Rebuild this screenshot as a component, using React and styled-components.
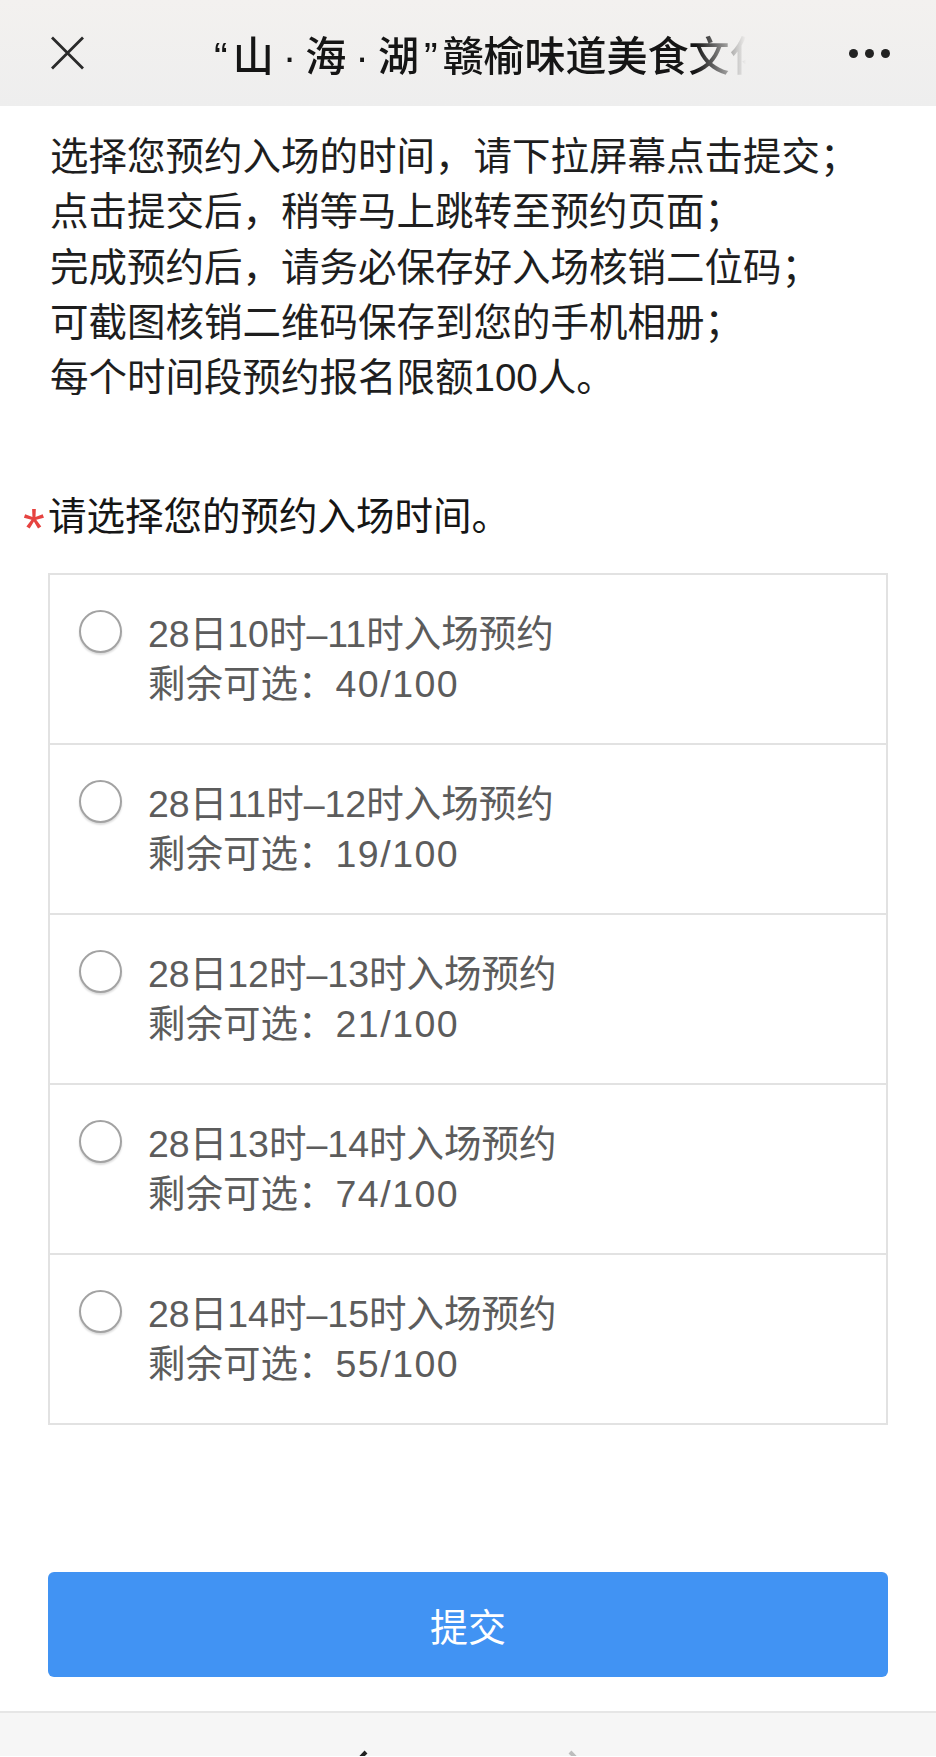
import React, { useState } from "react";
import styled, { createGlobalStyle } from "styled-components";

const GlobalStyle = createGlobalStyle`
  html, body {
    margin: 0;
    padding: 0;
    background: #ffffff;
    font-family: "Liberation Sans", "Noto Sans CJK SC", sans-serif;
  }
`;

const Page = styled.div`
  width: 936px;
  min-height: 1757px;
  display: flex;
  flex-direction: column;
  overflow: hidden;
`;

const Header = styled.div`
  height: 106px;
  display: flex;
  align-items: center;
  padding: 0 46px 0 50px;
  background: linear-gradient(#f3f1ef, #eeeeee);
  box-sizing: border-box;
`;

const CloseIcon = styled.svg`
  width: 35px;
  height: 34px;
  flex-shrink: 0;
`;

const Title = styled.div`
  margin-left: 124px;
  width: 537px;
  white-space: nowrap;
  overflow: hidden;
  font-size: 41px;
  font-weight: 500;
  color: #151515;
  -webkit-mask-image: linear-gradient(to right, #000 calc(100% - 50px), transparent);
  mask-image: linear-gradient(to right, #000 calc(100% - 50px), transparent);
`;

const Punct = styled.span`
  display: inline-block;
  margin: 0 ${(p) => p.$space || 0}px;
`;

const Dots = styled.div`
  margin-left: auto;
  display: flex;
  gap: 7px;
`;

const Dot = styled.span`
  width: 9px;
  height: 9px;
  border-radius: 50%;
  background: #222;
`;

const Content = styled.div`
  padding: 0 48px;
  display: flex;
  flex-direction: column;
`;

const Intro = styled.div`
  margin-top: 23px;
  padding-left: 2px;
  font-size: 38.5px;
  line-height: 55.3px;
  color: #1e1e1e;
`;

const Question = styled.div`
  margin-top: 84px;
  height: 55px;
  display: flex;
  align-items: flex-start;
  font-size: 38.5px;
  line-height: 55px;
  color: #161616;
`;

const Star = styled.span`
  margin-left: -25px;
  margin-top: 24px;
  width: 25px;
  color: #e64340;
  font-family: "Liberation Sans", sans-serif;
  font-size: 56px;
  line-height: 30px;
`;

const OptionBox = styled.div`
  margin-top: 29px;
  border: 2px solid #e2e2e2;
`;

const OptionRow = styled.label`
  display: flex;
  align-items: flex-start;
  padding: 34px 0 34px 29px;
  border-bottom: ${(p) => (p.$last ? "none" : "2px solid #e2e2e2")};
  cursor: pointer;
`;

const Radio = styled.span`
  margin-top: 1px;
  width: 43px;
  height: 43px;
  border-radius: 50%;
  box-sizing: border-box;
  border: 2px solid ${(p) => (p.$checked ? "#4193f3" : "#a3a3a3")};
  box-shadow: 0 2px 2px rgba(0, 0, 0, 0.14);
  background: #fff;
  flex-shrink: 0;
  display: flex;
  align-items: center;
  justify-content: center;

  &::after {
    content: "";
    width: 21px;
    height: 21px;
    border-radius: 50%;
    background: ${(p) => (p.$checked ? "#4193f3" : "transparent")};
  }
`;

const OptionText = styled.div`
  margin-left: 26px;
  font-size: 37.5px;
  line-height: 50px;
  color: #5c5c5c;
`;

const Count = styled.span`
  letter-spacing: 1.5px;
`;

const SubmitButton = styled.button`
  margin-top: 147px;
  height: 105px;
  border: none;
  border-radius: 6px;
  background: #4193f3;
  color: #ffffff;
  font-family: "Noto Sans CJK SC", sans-serif;
  font-size: 38px;
  cursor: pointer;
`;

const BottomBar = styled.div`
  margin-top: 34px;
  height: 45px;
  border-top: 2px solid #e6e6e6;
  background: #f6f6f6;
  display: flex;
  justify-content: center;
  gap: 196px;
  padding-top: 36px;
  box-sizing: border-box;
  overflow: hidden;
`;

const Chevron = styled.svg`
  width: 34px;
  height: 60px;
  flex-shrink: 0;
`;

const intro = [
  "选择您预约入场的时间，请下拉屏幕点击提交；",
  "点击提交后，稍等马上跳转至预约页面；",
  "完成预约后，请务必保存好入场核销二位码；",
  "可截图核销二维码保存到您的手机相册；",
  "每个时间段预约报名限额100人。",
];

const slots = [
  { label: "28日10时–11时入场预约", left: 40 },
  { label: "28日11时–12时入场预约", left: 19 },
  { label: "28日12时–13时入场预约", left: 21 },
  { label: "28日13时–14时入场预约", left: 74 },
  { label: "28日14时–15时入场预约", left: 55 },
];

export default function App() {
  const [selected, setSelected] = useState(null);

  return (
    <Page>
      <GlobalStyle />
      <Header>
        <CloseIcon viewBox="0 0 35 34">
          <path d="M2 1.5 L33 32.5 M33 1.5 L2 32.5" stroke="#2a2a2a" strokeWidth="2.8" fill="none" />
        </CloseIcon>
        <Title>
          <Punct $space={5}>“</Punct>山<Punct $space={9}>·</Punct>海<Punct $space={9}>·</Punct>湖<Punct $space={5}>”</Punct>赣榆味道美食文化节预约
        </Title>
        <Dots>
          <Dot />
          <Dot />
          <Dot />
        </Dots>
      </Header>
      <Content>
        <Intro>
          {intro.map((line) => (
            <div key={line}>{line}</div>
          ))}
        </Intro>
        <Question>
          <Star>*</Star>
          请选择您的预约入场时间。
        </Question>
        <OptionBox>
          {slots.map((slot, i) => (
            <OptionRow
              key={slot.label}
              $last={i === slots.length - 1}
              onClick={() => setSelected(i)}
            >
              <Radio $checked={selected === i} />
              <OptionText>
                <div>{slot.label}</div>
                <div>
                  剩余可选：<Count>{slot.left}/100</Count>
                </div>
              </OptionText>
            </OptionRow>
          ))}
        </OptionBox>
        <SubmitButton>提交</SubmitButton>
      </Content>
      <BottomBar>
        <Chevron viewBox="0 0 34 60">
          <path d="M30 3 L4 30 L30 57" stroke="#222" strokeWidth="4" fill="none" />
        </Chevron>
        <Chevron viewBox="0 0 34 60">
          <path d="M4 3 L30 30 L4 57" stroke="#bdbdbd" strokeWidth="4" fill="none" />
        </Chevron>
      </BottomBar>
    </Page>
  );
}
